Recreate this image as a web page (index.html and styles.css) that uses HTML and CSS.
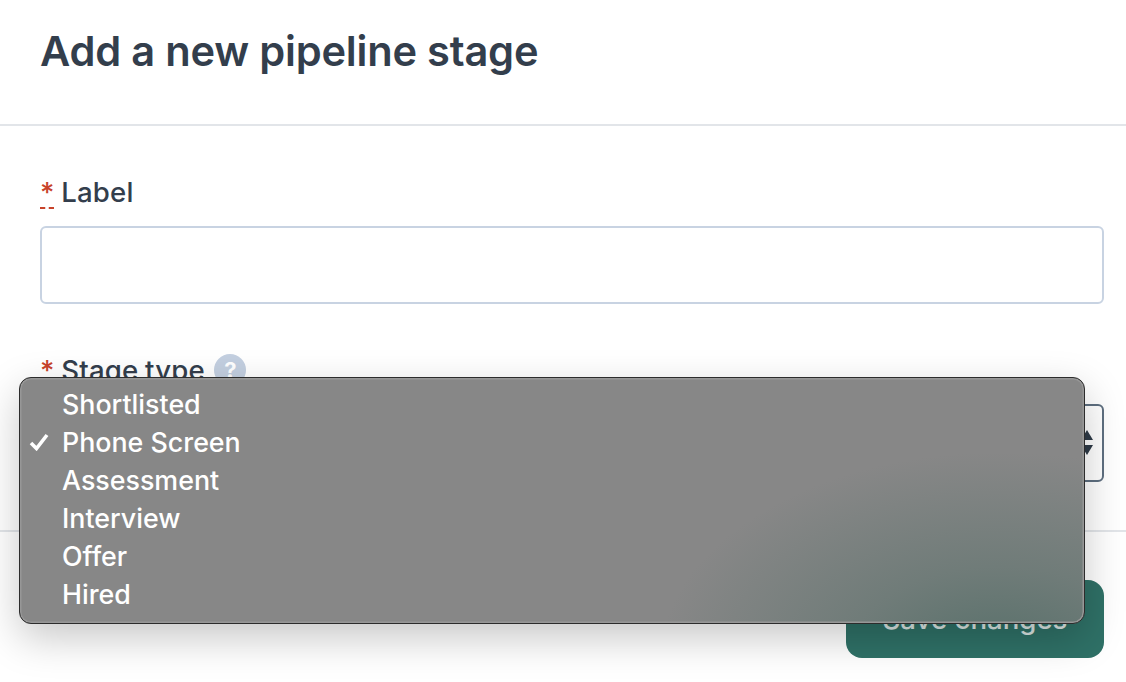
FILE: index.html
```html
<!DOCTYPE html>
<html>
  <head>
    <title>Add a new pipeline stage</title>
    <link rel="stylesheet" href="styles.css">
  </head>

  <body>
    <div class="header">
      <h1>Add a new pipeline stage</h1>
    </div>

    <form class="form">
      <div class="field">
        <label class="label"><abbr class="required">*</abbr> Label</label>
        <div class="input"></div>
      </div>
      <div class="field">
        <label class="label">
          <span class="required">*</span> Stage type
          <span class="help">?</span>
        </label>
        <div class="input select">
          <svg class="arrows" width="14" height="28" viewBox="0 0 14 28">
            <path d="M7 1 L13 11 L1 11 Z" fill="#2f3b48" />
            <path d="M7 26 L13 16 L1 16 Z" fill="#2f3b48" />
          </svg>
        </div>
      </div>
    </form>

    <div class="footer">
      <button class="button" type="button">Save changes</button>
    </div>

    <!-- Native select menu, open over the form -->
    <ul class="menu">
      <li>Shortlisted</li>
      <li class="checked">
        <svg class="check" width="20" height="18" viewBox="0 0 20 18">
          <path d="M2 10 L7.5 15.5 L18 2" fill="none" stroke="#fff" stroke-width="3.6" />
        </svg>
        Phone Screen
      </li>
      <li>Assessment</li>
      <li>Interview</li>
      <li>Offer</li>
      <li>Hired</li>
    </ul>
  </body>
</html>
```

FILE: styles.css
```css
body {
  font-family: Inter, "Liberation Sans", sans-serif;
  background-color: #fff;
  color: #333e4c;
  margin: 0;
  padding: 0;
  height: 682px;
  overflow: hidden;
}

.header {
  height: 124px;
  padding: 0 40px;
  border-bottom: 2px solid #e2e5e9;
}

.header h1 {
  margin: 0;
  padding-top: 24px;
  font-size: 41.6px;
  line-height: 54px;
  font-weight: 600;
  letter-spacing: -0.2px;
}

.form {
  padding: 48px 22px 48px 40px;
  display: flex;
  flex-direction: column;
  gap: 48px;
}

.label {
  display: block;
  height: 36px;
  margin-bottom: 16px;
  font-size: 27.6px;
  line-height: 37px;
  font-weight: 550;
  letter-spacing: 0.2px;
  word-spacing: -1px;
}

.required {
  color: #c8432a;
}

abbr.required {
  text-decoration: underline dashed #c8432a 2px;
  text-underline-offset: 5px;
}

.help {
  display: inline-block;
  width: 32px;
  height: 32px;
  margin-left: 3px;
  border-radius: 50%;
  background-color: #c3cfe0;
  color: #fff;
  font-size: 22px;
  font-weight: 700;
  line-height: 32px;
  text-align: center;
  vertical-align: 2px;
}

.input {
  height: 74px;
  border: 2px solid #c8d3e2;
  border-radius: 6px;
  background-color: #fff;
}

.select {
  border-color: #5e6f80;
  display: flex;
  align-items: center;
  justify-content: flex-end;
  padding-right: 8px;
}

.footer {
  border-top: 2px solid #e2e5e9;
  padding: 48px 22px 0 40px;
  display: flex;
  justify-content: flex-end;
}

.button {
  width: 258px;
  height: 78px;
  background-color: #2f7167;
  color: #dbe5e3;
  font-family: inherit;
  font-size: 27.6px;
  font-weight: 500;
  border: none;
  border-radius: 16px;
}

.menu {
  position: absolute;
  top: 377px;
  left: 19px;
  width: 1066px;
  height: 247px;
  box-sizing: border-box;
  margin: 0;
  padding: 7px 0 0 42px;
  list-style: none;
  color: #fff;
  font-size: 26.8px;
  font-weight: 500;
  line-height: 38px;
  border: 1.5px solid #2c2c2c;
  border-radius: 12px;
  background:
    radial-gradient(ellipse 340px 210px at 92% 116%, #566f69 0%, rgba(104, 120, 116, 0.75) 45%, rgba(136, 136, 136, 0) 100%),
    #878787;
  box-shadow: inset 0 0 0 1.5px #979797, 0 14px 40px rgba(0, 0, 0, 0.22);
}

.menu li {
  position: relative;
  height: 38px;
}

.check {
  position: absolute;
  left: -33px;
  top: 10px;
}
```
